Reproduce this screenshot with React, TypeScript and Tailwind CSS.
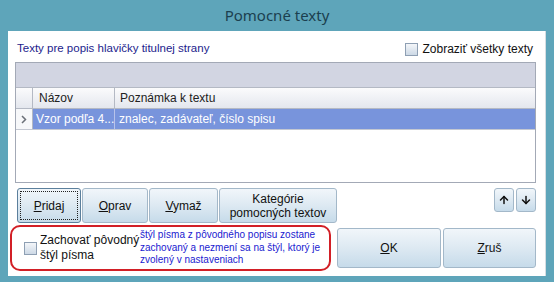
import { ArrowUp, ArrowDown } from 'lucide-react'

const ui = { fontFamily: '"Liberation Sans", Arial, sans-serif' }

function Btn({
  children,
  className = '',
  focused = false,
}: {
  children: React.ReactNode
  className?: string
  focused?: boolean
}) {
  return (
    <div
      className={`flex items-center justify-center whitespace-nowrap rounded-[3px] border bg-gradient-to-b from-[#f1f6fa] via-[#dde9f2] to-[#c6dbea] text-[#111] ${
        focused ? 'border-[#5b7f9c]' : 'border-[#a3b8c9]'
      } ${className}`}
    >
      {focused ? (
        <div className="m-[2px] flex h-[calc(100%-4px)] w-[calc(100%-4px)] items-center justify-center border border-dotted border-[#222]">
          {children}
        </div>
      ) : (
        children
      )}
    </div>
  )
}

function CheckBox() {
  return (
    <span className="inline-block h-[13px] w-[13px] shrink-0 border border-[#8e9fb3] bg-gradient-to-b from-[#f4f6f9] to-[#cdd9e6]" />
  )
}

export default function App() {
  return (
    <div
      className="flex h-[282px] w-[554px] flex-col bg-[#5ea5ba] text-[12px]"
      style={ui}
    >
      <div
        className="flex h-[31px] items-center justify-center pb-[1px] text-[15px] text-[#1b3f4f]"
        style={{ fontFamily: '"Noto Sans", "Open Sans", sans-serif' }}
      >
        Pomocné texty
      </div>

      <div className="ml-[8px] mr-[8px] mb-[6px] flex flex-1 flex-col border-r border-[#d6dde2] bg-white px-[7px] pt-[8px]">
        <div className="flex h-[20px] items-center justify-between whitespace-nowrap pl-[2px] pr-[5px]">
          <span className="text-[11.5px] text-[#1c1c8c]">Texty pre popis hlavičky titulnej strany</span>
          <span className="flex items-center gap-[4px] text-[#111]">
            <CheckBox />
            Zobraziť všetky texty
          </span>
        </div>

        <div className="mt-[3px] flex h-[121px] w-[521px] flex-col border border-[#a3a9b6] bg-white">
          <div className="h-[24px] bg-[#d2d5e2]" />
          <div className="flex h-[22px] border-y border-[#b4b9c4] bg-gradient-to-b from-[#fbfbfc] to-[#e4e7ee] text-[#222]">
            <div className="w-[17px] border-r border-[#b4b9c4]" />
            <div className="flex w-[82px] items-center border-r border-[#b4b9c4] pl-[6px]">Názov</div>
            <div className="flex flex-1 items-center pl-[5px]">Poznámka k textu</div>
          </div>
          <div className="flex h-[21px] whitespace-nowrap border-b border-[#c4c8d2] text-white">
            <div className="flex w-[17px] items-center justify-center border-r border-[#b4b9c4] bg-[#f7f8fa]">
              <svg width="6" height="9" viewBox="0 0 6 9">
                <path d="M1 1 L4.5 4.5 L1 8" fill="none" stroke="#6b7078" strokeWidth="1.5" />
              </svg>
            </div>
            <div className="flex w-[82px] items-center overflow-hidden border-r border-[#b7c3ea] bg-[#7894dc] pl-[3px]">Vzor podľa 4...</div>
            <div className="flex flex-1 items-center bg-[#7894dc] pl-[4px]">znalec, zadávateľ, číslo spisu</div>
          </div>
          <div className="flex-1" />
        </div>

        <div className="mt-[5px] flex h-[35px] items-start">
          <Btn focused className="ml-[2px] h-[35px] w-[64px]">
            <span><u>P</u>ridaj</span>
          </Btn>
          <Btn className="ml-[1px] h-[35px] w-[66px]">
            <span><u>O</u>prav</span>
          </Btn>
          <Btn className="ml-[1px] h-[35px] w-[69px]">
            <span><u>V</u>ymaž</span>
          </Btn>
          <Btn className="ml-[1px] h-[35px] w-[118px] text-center leading-[14px]">
            <span>Kategórie<br />pomocných textov</span>
          </Btn>
          <div className="flex-1" />
          <Btn className="h-[24px] w-[20px]">
            <ArrowUp size={12} strokeWidth={3} color="#111" />
          </Btn>
          <Btn className="ml-[2px] mr-[2px] h-[24px] w-[20px]">
            <ArrowDown size={12} strokeWidth={3} color="#111" />
          </Btn>
        </div>

        <div className="mt-[2px] flex items-start">
          <div className="-ml-[5px] flex h-[46px] w-[321px] items-center rounded-[10px] border-2 border-[#d21f26] whitespace-nowrap">
            <div className="ml-[12px] flex w-[116px] shrink-0 items-center gap-[3px] text-[12px] leading-[15px] text-[#111]">
              <CheckBox />
              <span>Zachovať pôvodný<br />štýl písma</span>
            </div>
            <div className="text-[10px] leading-[12.5px] text-[#1a1ad0]">
              štýl písma z pôvodného popisu zostane<br />
              zachovaný a nezmení sa na štýl, ktorý je<br />
              zvolený v nastaveniach
            </div>
          </div>
          <Btn className="ml-[6px] mt-[3px] h-[40px] w-[104px] text-[12px]">
            <span><u>O</u>K</span>
          </Btn>
          <Btn className="ml-[2px] mt-[3px] h-[40px] w-[93px] text-[12px]">
            <span><u>Z</u>ruš</span>
          </Btn>
        </div>
      </div>
    </div>
  )
}
